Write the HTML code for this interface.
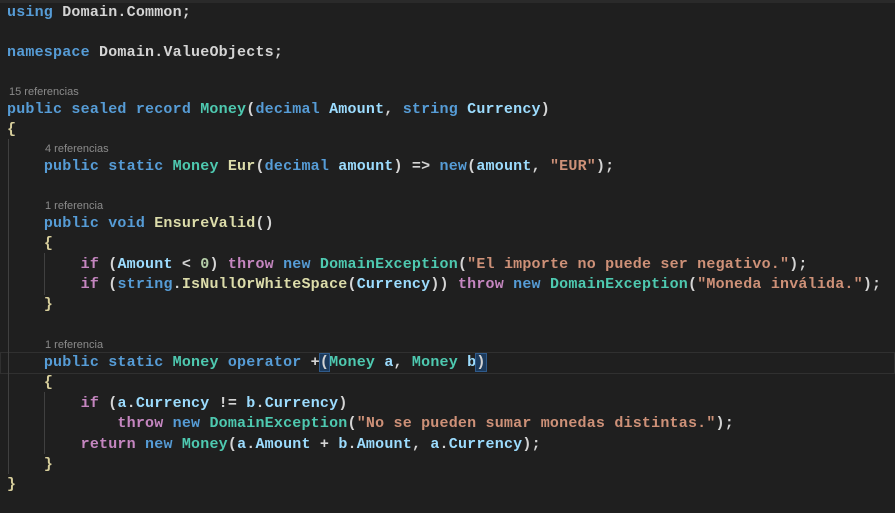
<!DOCTYPE html>
<html><head><meta charset="utf-8"><style>
html,body{margin:0;padding:0}
body{width:895px;height:513px;background:#1f1f1f;overflow:hidden;position:relative;font-family:"Liberation Mono",monospace;font-size:15px;color:#d4d4d4}
.l{position:absolute;left:7px;height:20px;line-height:20px;white-space:pre;letter-spacing:0.2px;font-weight:bold}
.c{position:absolute;height:14px;line-height:14px;font-family:"Liberation Sans",sans-serif;font-size:11px;color:#8b8b8b;white-space:pre}
.k{color:#569cd6}.t{color:#4ec9b0}.m{color:#dcdcaa}.v{color:#9cdcfe}.s{color:#ce9178}.p{color:#c586c0}.n{color:#b5cea8}.b{color:#d8cf9c}
.g{position:absolute;width:1px;background:#404040}
.cur{position:absolute;left:0;width:893px;top:352px;height:20px;border:1px solid #303030}
.bh{background:#1c3a5c;outline:1px solid #2f5a8a}
</style></head><body>
<div style="position:absolute;left:0;top:0;width:895px;height:3px;background:#2a2a2a"></div>
<div class="cur"></div>
<div class="g" style="left:8px;top:139px;height:335px"></div>
<div class="g" style="left:44px;top:253px;height:42px"></div>
<div class="g" style="left:44px;top:392px;height:62px"></div>

<div class="l" style="top:3px"><span class="k">using</span> Domain.Common;</div>
<div class="l" style="top:43px"><span class="k">namespace</span> Domain.ValueObjects;</div>
<div class="c" style="left:9px;top:85px">15 referencias</div>
<div class="l" style="top:100px"><span class="k">public sealed record</span> <span class="t">Money</span>(<span class="k">decimal</span> <span class="v">Amount</span>, <span class="k">string</span> <span class="v">Currency</span>)</div>
<div class="l" style="top:120px"><span class="b">{</span></div>
<div class="c" style="left:45px;top:142px">4 referencias</div>
<div class="l" style="top:157px">    <span class="k">public static</span> <span class="t">Money</span> <span class="m">Eur</span>(<span class="k">decimal</span> <span class="v">amount</span>) =&gt; <span class="k">new</span>(<span class="v">amount</span>, <span class="s">"EUR"</span>);</div>
<div class="c" style="left:45px;top:199px">1 referencia</div>
<div class="l" style="top:214px">    <span class="k">public void</span> <span class="m">EnsureValid</span>()</div>
<div class="l" style="top:234px">    <span class="b">{</span></div>
<div class="l" style="top:255px">        <span class="p">if</span> (<span class="v">Amount</span> &lt; <span class="n">0</span>) <span class="p">throw</span> <span class="k">new</span> <span class="t">DomainException</span>(<span class="s">"El importe no puede ser negativo."</span>);</div>
<div class="l" style="top:275px">        <span class="p">if</span> (<span class="k">string</span>.<span class="m">IsNullOrWhiteSpace</span>(<span class="v">Currency</span>)) <span class="p">throw</span> <span class="k">new</span> <span class="t">DomainException</span>(<span class="s">"Moneda inválida."</span>);</div>
<div class="l" style="top:295px">    <span class="b">}</span></div>
<div class="c" style="left:45px;top:338px">1 referencia</div>
<div class="l" style="top:353px">    <span class="k">public static</span> <span class="t">Money</span> <span class="k">operator</span> +<span class="bh">(</span><span class="t">Money</span> <span class="v">a</span>, <span class="t">Money</span> <span class="v">b</span><span class="bh">)</span><span style="border-left:1px solid #ccc"></span></div>
<div class="l" style="top:373px">    <span class="b">{</span></div>
<div class="l" style="top:394px">        <span class="p">if</span> (<span class="v">a</span>.<span class="v">Currency</span> != <span class="v">b</span>.<span class="v">Currency</span>)</div>
<div class="l" style="top:414px">            <span class="p">throw</span> <span class="k">new</span> <span class="t">DomainException</span>(<span class="s">"No se pueden sumar monedas distintas."</span>);</div>
<div class="l" style="top:435px">        <span class="p">return</span> <span class="k">new</span> <span class="t">Money</span>(<span class="v">a</span>.<span class="v">Amount</span> + <span class="v">b</span>.<span class="v">Amount</span>, <span class="v">a</span>.<span class="v">Currency</span>);</div>
<div class="l" style="top:455px">    <span class="b">}</span></div>
<div class="l" style="top:475px"><span class="b">}</span></div>
</body></html>
